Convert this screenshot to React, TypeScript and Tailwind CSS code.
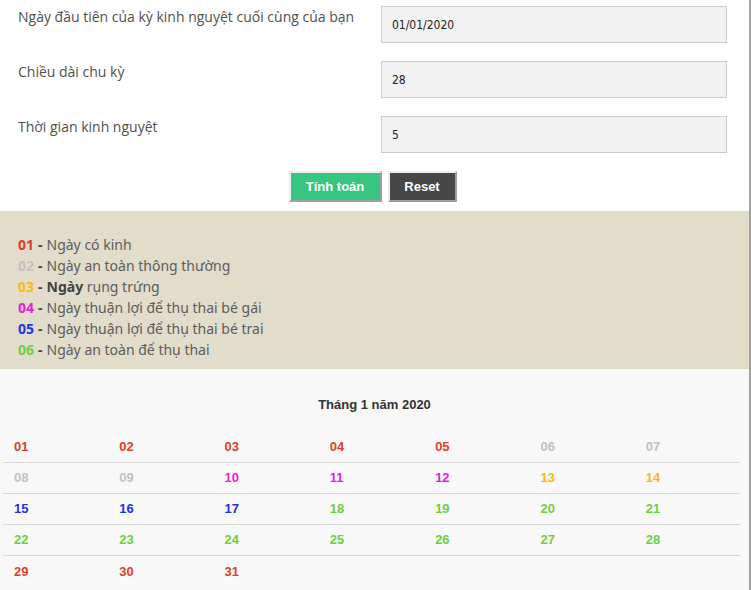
import React from "react";

const C = {
  red: "text-[#e03e2d]",
  gray: "text-[#c2c2c2]",
  orange: "text-[#fbb817]",
  pink: "text-[#e41fd9]",
  blue: "text-[#1f33e8]",
  green: "text-[#6fcf3e]",
};

function colorFor(d: number): string {
  if (d <= 5 || d >= 29) return C.red;
  if (d <= 9) return C.gray;
  if (d <= 12) return C.pink;
  if (d <= 14) return C.orange;
  if (d <= 17) return C.blue;
  return C.green;
}

const rows: number[][] = [
  [1, 2, 3, 4, 5, 6, 7],
  [8, 9, 10, 11, 12, 13, 14],
  [15, 16, 17, 18, 19, 20, 21],
  [22, 23, 24, 25, 26, 27, 28],
  [29, 30, 31],
];

const fields = [
  { label: "Ngày đầu tiên của kỳ kinh nguyệt cuối cùng của bạn", value: "01/01/2020" },
  { label: "Chiều dài chu kỳ", value: "28" },
  { label: "Thời gian kinh nguyệt", value: "5" },
];

const legend = [
  { n: "01", c: C.red, t: <>Ngày có kinh</> },
  { n: "02", c: C.gray, t: <>Ngày an toàn thông thường</> },
  { n: "03", c: C.orange, t: <><b className="font-bold text-[#444]">Ngày</b> rụng trứng</> },
  { n: "04", c: C.pink, t: <>Ngày thuận lợi để thụ thai bé gái</> },
  { n: "05", c: C.blue, t: <>Ngày thuận lợi để thụ thai bé trai</> },
  { n: "06", c: C.green, t: <>Ngày an toàn để thụ thai</> },
];

export default function App() {
  return (
    <div className="w-[751px] h-[590px] overflow-hidden bg-white" style={{ fontFamily: '"Open Sans", "Noto Sans", sans-serif' }}>
      <div className="w-[749px] h-[590px] border-r-2 border-[#a3a3a3] box-content">
        {/* form */}
        <div className="pt-[6px] flex flex-col gap-[18px]">
          {fields.map((f) => (
            <div key={f.label} className="flex items-start">
              <div className="w-[381px] pl-[18px] pt-[1px] text-[14px] leading-[20px] text-[#505050]">{f.label}</div>
              <div className="w-[346px] h-[37px] bg-[#f2f2f2] border border-[#cccccc] flex items-center pl-[10px] text-[12px] text-[#222]" style={{ fontFamily: '"DejaVu Sans Condensed", "Liberation Sans", sans-serif' }}>
                {f.value}
              </div>
            </div>
          ))}
        </div>
        <div className="flex justify-center gap-[6px] mt-[18px] pr-[4px]" style={{ fontFamily: '"Liberation Sans", Arial, sans-serif' }}>
          <button className="w-[93px] h-[31px] bg-[#36c680] text-white text-[13px] font-bold border-2 border-t-[#eeeeee] border-l-[#eeeeee] border-r-[#a0a0a0] border-b-[#a0a0a0]">Tính toán</button>
          <button className="w-[69px] h-[31px] bg-[#474747] text-white text-[13px] font-bold border-2 border-t-[#eeeeee] border-l-[#eeeeee] border-r-[#a0a0a0] border-b-[#a0a0a0]">Reset</button>
        </div>
        {/* legend */}
        <div className="mt-[9px] h-[158px] bg-[#e2dcca] pt-[23px] pl-[18px] text-[14px] leading-[21px] text-[#5c5c5c]" style={{ fontFamily: '"Noto Sans", "Open Sans", sans-serif' }}>
          {legend.map((l) => (
            <div key={l.n}>
              <span className={`font-bold ${l.c}`}>{l.n}</span>
              <span className="font-bold text-[#444] mx-[4px]">-</span>
              {l.t}
            </div>
          ))}
        </div>
        {/* calendar */}
        <div className="bg-[#f8f8f8] h-[221px] pt-[27px]" style={{ fontFamily: '"Liberation Sans", Arial, sans-serif' }}>
          <div className="text-center text-[13px] font-bold text-[#333] leading-[18px]">Tháng 1 năm 2020</div>
          <div className="mt-[18px] ml-[3px] w-[737px]">
            {rows.map((r, i) => (
              <div key={i} className={`grid grid-cols-7 h-[31px] ${i < rows.length - 1 ? "border-b border-[#d8d8d8]" : ""}`}>
                {r.map((d) => (
                  <div key={d} className={`pl-[11px] flex items-center text-[13px] font-bold ${colorFor(d)}`}>
                    {String(d).padStart(2, "0")}
                  </div>
                ))}
              </div>
            ))}
          </div>
        </div>
      </div>
    </div>
  );
}
